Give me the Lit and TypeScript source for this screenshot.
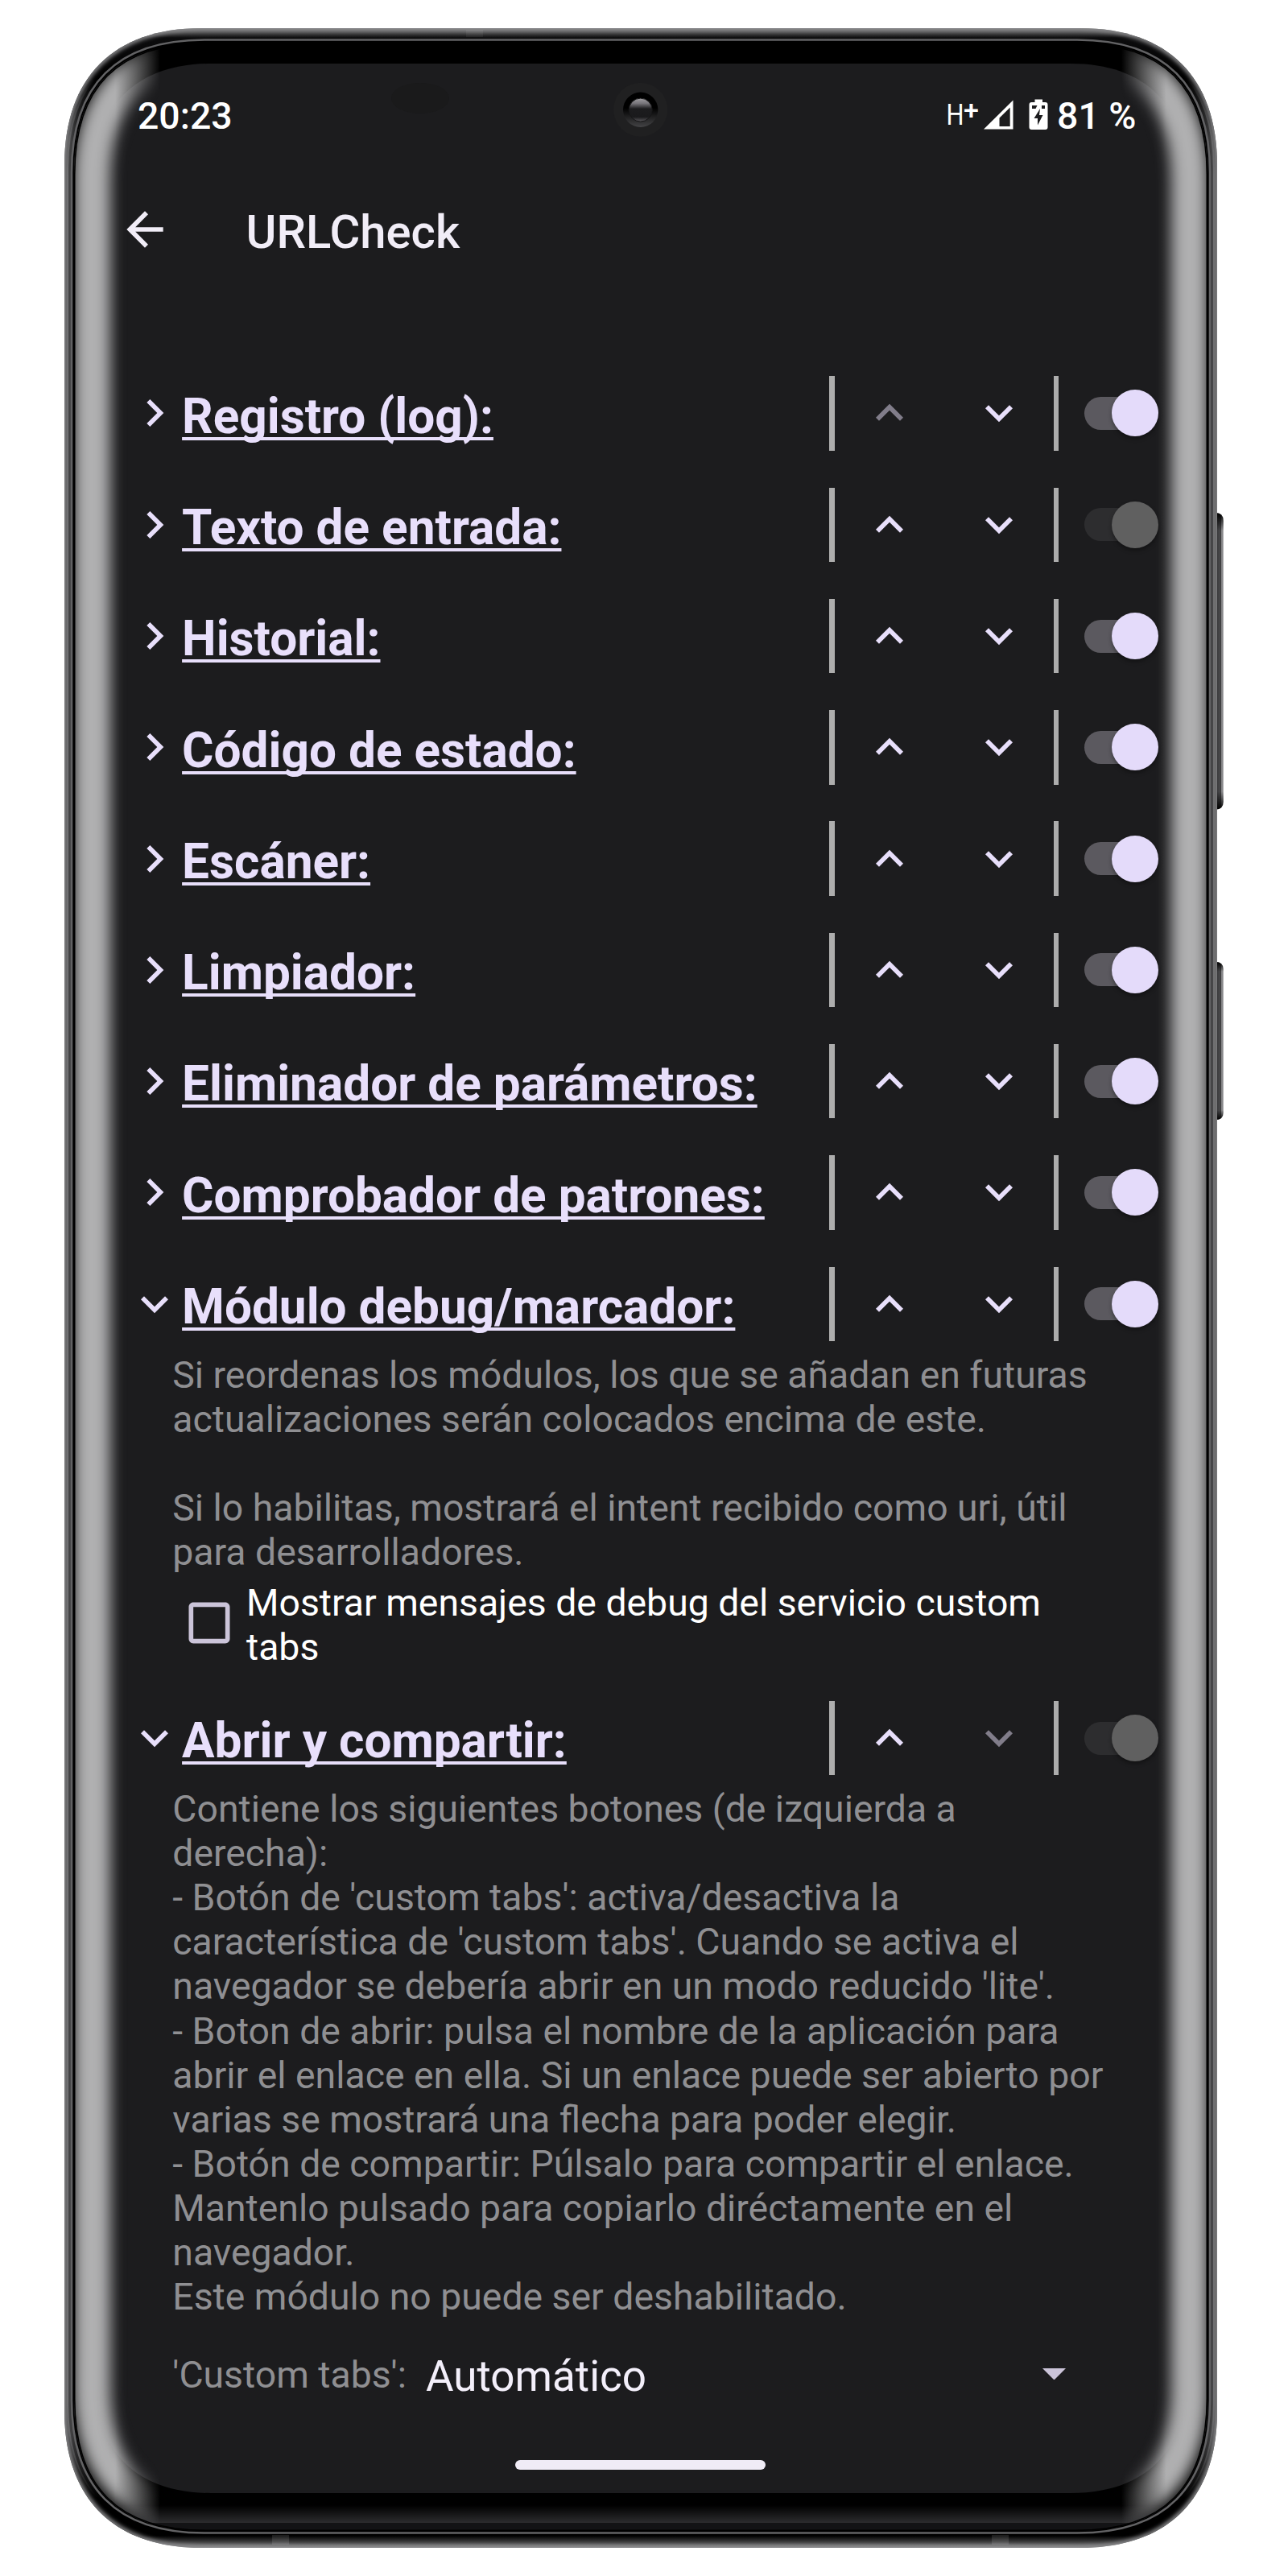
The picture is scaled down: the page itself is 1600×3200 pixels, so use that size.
import { LitElement, html, css, svg } from "lit";
import { customElement, property } from "lit/decorators.js";

/** Closed path of a rectangle whose corners ease in over length a. */
function softRect(l: number, t: number, r: number, b: number, a: number, k: number): string {
  const c = a * (1 - k);
  return `M${l} ${t + a}C${l} ${t + c} ${l + c} ${t} ${l + a} ${t}H${r - a}C${r - c} ${t} ${r} ${t + c} ${r} ${t + a}V${b - a}C${r} ${b - c} ${r - c} ${b} ${r - a} ${b}H${l + a}C${l + c} ${b} ${l} ${b - c} ${l} ${b - a}Z`;
}

const BODY = softRect(80, 35, 1512, 3165, 170, 0.64);
const BODY_DARK = softRect(84, 43, 1508, 3153, 166, 0.64);
const RING = softRect(89, 49.5, 1503, 3146.5, 165, 0.66);
const GLASS = softRect(92, 53, 1500, 3144, 164, 0.67);
const SCREEN = softRect(117, 79, 1475, 3097, 145, 0.64);
const GLOW = softRect(114, 66, 1478, 3124, 158, 0.66);

@customElement("phone-frame")
export class PhoneFrame extends LitElement {
  static styles = css`
    :host { display: block; }
    svg { display: block; }
  `;
  render() {
    return html`<svg width="1600" height="3200" viewBox="0 0 1600 3200">
      <defs>
        <linearGradient id="edgeY" gradientUnits="userSpaceOnUse" x1="0" y1="35" x2="0" y2="3165">
          <stop offset="0" stop-color="#777779" />
          <stop offset="0.0018" stop-color="#4a4a4b" />
          <stop offset="0.0038" stop-color="#0c0c0d" />
          <stop offset="0.02" stop-color="#000" />
          <stop offset="0.045" stop-color="#3c3c3d" />
          <stop offset="0.955" stop-color="#3c3c3d" />
          <stop offset="0.98" stop-color="#000" />
          <stop offset="0.9952" stop-color="#000" />
          <stop offset="0.998" stop-color="#454546" />
          <stop offset="1" stop-color="#8a8a8c" />
        </linearGradient>
        <linearGradient id="sideFade" gradientUnits="userSpaceOnUse" x1="0" y1="35" x2="0" y2="3165">
          <stop offset="0.02" stop-color="#707072" stop-opacity="0" />
          <stop offset="0.06" stop-color="#707072" />
          <stop offset="0.94" stop-color="#707072" />
          <stop offset="0.98" stop-color="#707072" stop-opacity="0" />
        </linearGradient>
        <linearGradient id="chin" x1="0" y1="0" x2="0" y2="1">
          <stop offset="0" stop-color="#000" />
          <stop offset="1" stop-color="#2c2c2e" />
        </linearGradient>
        <linearGradient id="key" x1="0" y1="0" x2="1" y2="0">
          <stop offset="0" stop-color="#2c2c2e" />
          <stop offset="0.55" stop-color="#4a4a4c" />
          <stop offset="0.68" stop-color="#3a3a3c" />
          <stop offset="0.75" stop-color="#858587" />
          <stop offset="1" stop-color="#8c8c8e" />
        </linearGradient>
        <linearGradient id="keyEnds" x1="0" y1="0" x2="0" y2="1">
          <stop offset="0" stop-color="#000" />
          <stop offset="0.06" stop-color="#000" stop-opacity="0" />
          <stop offset="0.94" stop-color="#000" stop-opacity="0" />
          <stop offset="1" stop-color="#000" />
        </linearGradient>
        <clipPath id="glassClip"><path d=${GLASS} /></clipPath>
        <filter id="soft" filterUnits="userSpaceOnUse" x="0" y="0" width="1600" height="3200">
          <feGaussianBlur stdDeviation="2.5" />
        </filter>
        <clipPath id="bodyClip"><path d=${BODY} /></clipPath>
      </defs>
      <path d="M1510 637Q1519.7 637 1519.7 647V996Q1519.7 1005.500 1510 1005.500Z" fill="url(#key)" />
      <path d="M1510 637Q1519.700 637 1519.700 647V996Q1519.700 1005.500 1510 1005.500Z" fill="url(#keyEnds)" />
      <path d="M1510 1195Q1519.700 1195 1519.700 1204V1382Q1519.700 1391 1510 1391Z" fill="url(#key)" />
      <path d="M1510 1195Q1519.700 1195 1519.700 1204V1382Q1519.700 1391 1510 1391Z" fill="url(#keyEnds)" />
      <path d=${BODY} fill="url(#edgeY)" />
      <g clip-path="url(#bodyClip)">
        <path d=${BODY} fill="none" stroke="#8a8a8c" stroke-width="6" filter="url(#soft)" />
        <path d=${BODY_DARK} fill="none" stroke="url(#sideFade)" stroke-width="2" />
        <rect x="579" y="37" width="21" height="9" fill="#fff" opacity="0.06" />
        <rect x="338" y="3149" width="21" height="12" fill="#fff" opacity="0.11" />
        <rect x="1232" y="3149" width="21" height="12" fill="#fff" opacity="0.11" />
      </g>
      <path d=${RING} fill="#000" stroke="#626264" stroke-width="2.600" />
      <g clip-path="url(#glassClip)">
        <rect x="92" y="3112" width="1408" height="22" fill="url(#chin)" />
        <rect x="92" y="3134" width="1408" height="11" fill="#131315" />
      </g>
      <path d=${SCREEN} fill="#1c1c1e" />
      <ellipse cx="522" cy="122" rx="36" ry="19" fill="#1a1a1b" />
    </svg>`;
  }
}

@customElement("glass-glow")
export class GlassGlow extends LitElement {
  static styles = css`
    :host { display: block; }
    svg { display: block; }
  `;
  render() {
    return html`<svg width="1600" height="3200" viewBox="0 0 1600 3200">
      <defs>
        <clipPath id="inner"><path d=${GLASS} /></clipPath>
        <linearGradient id="sides" gradientUnits="userSpaceOnUse" x1="0" y1="0" x2="1592" y2="0">
          <stop offset="0.090" stop-color="#fff" />
          <stop offset="0.125" stop-color="#000" />
          <stop offset="0.875" stop-color="#000" />
          <stop offset="0.910" stop-color="#fff" />
        </linearGradient>
        <mask id="sideMask" maskUnits="userSpaceOnUse" x="0" y="0" width="1600" height="3200">
          <rect width="1600" height="3200" fill="url(#sides)" />
        </mask>
        <filter id="blur" filterUnits="userSpaceOnUse" x="0" y="0" width="1600" height="3200" color-interpolation-filters="sRGB">
          <feGaussianBlur stdDeviation="9" />
        </filter>
      </defs>
      <g clip-path="url(#inner)">
        <g mask="url(#sideMask)">
          <path d=${GLOW} fill="none" stroke="#b0b0b1" stroke-width="46" filter="url(#blur)" />
        </g>
        <path d=${GLASS} fill="none" stroke="#000" stroke-width="3" />
      </g>
      <defs>
        <linearGradient id="rim" x1="0" y1="0" x2="0" y2="1">
          <stop offset="0.45" stop-color="#000" />
          <stop offset="1" stop-color="#444446" />
        </linearGradient>
        <linearGradient id="lens" x1="0" y1="0" x2="0" y2="1">
          <stop offset="0" stop-color="#a09ea2" />
          <stop offset="0.220" stop-color="#77757a" />
          <stop offset="0.450" stop-color="#1c1c1e" />
          <stop offset="0.800" stop-color="#1a1a1c" />
          <stop offset="1" stop-color="#5c5a5e" />
        </linearGradient>
      </defs>
      <circle cx="795.700" cy="136.300" r="33.500" fill="#202021" />
      <circle cx="795.700" cy="136.300" r="21.700" fill="url(#rim)" />
      <circle cx="795.700" cy="136.600" r="14.500" fill="url(#lens)" stroke="#161617" stroke-width="1" />
    </svg>`;
  }
}

const ICONS: Record<string, string> = {
  right: "M8.590 16.590L13.170 12 8.590 7.410 10 6l6 6-6 6z",
  up: "M12 8l-6 6 1.410 1.410L12 10.830l4.590 4.580L18 14z",
  down: "M16.590 8.590L12 13.170 7.410 8.590 6 10l6 6 6-6z",
  back: "M20 11H7.830l5.590-5.590L12 4l-8 8 8 8 1.410-1.410L7.830 13H20z",
  box: "M19 5v14H5V5h14m0-2H5c-1.100 0-2 .900-2 2v14c0 1.100.900 2 2 2h14c1.100 0 2-.900 2-2V5c0-1.100-.900-2-2-2z",
};

const icon = (name: string) =>
  html`<svg class="icon" viewBox="0 0 24 24">${svg`<path d=${ICONS[name]} fill="currentColor" />`}</svg>`;

@customElement("module-row")
export class ModuleRow extends LitElement {
  @property() label = "";
  @property({ type: Boolean }) open = false;
  @property({ type: Boolean }) first = false;
  @property({ type: Boolean }) last = false;
  @property({ type: Boolean }) locked = false;

  static styles = css`
    :host { display: block; }
    .row { display: flex; align-items: center; height: 92.4px; padding-left: 157.6px; color: #e8dffb; }
    .icon { display: block; width: 68px; height: 68px; flex: none; }
    .title {
      width: 804.3px; margin-left: 0.5px; padding-top: 8.5px; box-sizing: border-box; white-space: nowrap;
      font-size: 60.3px; line-height: 72px; font-weight: 700;
      text-decoration: underline; text-decoration-skip-ink: none;
      text-decoration-thickness: 3.5px; text-underline-offset: 4.5px;
    }
    .bar { width: 6.5px; height: 92.4px; background: #adadad; flex: none; }
    .step { width: 136px; display: flex; justify-content: center; flex: none; }
    .off { color: #817d8a; }
    .switch {
      display: flex; align-items: center; justify-content: flex-end; margin-left: 31.4px;
      width: 92px; height: 41px; border-radius: 21px; flex: none;
      background: linear-gradient(90deg, #5b595f 75px, transparent 75px);
    }
    .thumb { width: 58px; height: 58px; border-radius: 50%; background: #e4dbfa; flex: none; box-shadow: 0 3px 5px rgba(0, 0, 0, 0.35); }
    .locked { background: linear-gradient(90deg, #2d2d2f 75px, transparent 75px); }
    .locked .thumb { background: #606060; }
  `;
  render() {
    return html`<div class="row">
      ${icon(this.open ? "down" : "right")}
      <div class="title">${this.label}</div>
      <div class="bar"></div>
      <div class="step ${this.first ? "off" : ""}">${icon("up")}</div>
      <div class="step ${this.last ? "off" : ""}">${icon("down")}</div>
      <div class="bar"></div>
      <div class="switch ${this.locked ? "locked" : ""}"><div class="thumb"></div></div>
    </div>`;
  }
}

const MODULES = [
  { label: "Registro (log):", first: true },
  { label: "Texto de entrada:", locked: true },
  { label: "Historial:" },
  { label: "Código de estado:" },
  { label: "Escáner:" },
  { label: "Limpiador:" },
  { label: "Eliminador de parámetros:" },
  { label: "Comprobador de patrones:" },
];

const DEBUG_TEXT = [
  "Si reordenas los módulos, los que se añadan en futuras",
  "actualizaciones serán colocados encima de este.",
  "",
  "Si lo habilitas, mostrará el intent recibido como uri, útil",
  "para desarrolladores.",
].join("\n");

const OPEN_TEXT = [
  "Contiene los siguientes botones (de izquierda a",
  "derecha):",
  "- Botón de 'custom tabs': activa/desactiva la",
  "característica de 'custom tabs'. Cuando se activa el",
  "navegador se debería abrir en un modo reducido 'lite'.",
  "- Boton de abrir: pulsa el nombre de la aplicación para",
  "abrir el enlace en ella. Si un enlace puede ser abierto por",
  "varias se mostrará una flecha para poder elegir.",
  "- Botón de compartir: Púlsalo para compartir el enlace.",
  "Mantenlo pulsado para copiarlo diréctamente en el",
  "navegador.",
  "Este módulo no puede ser deshabilitado.",
].join("\n");

@customElement("app-root")
export class AppRoot extends LitElement {
  static styles = css`
    :host {
      display: block; position: relative; width: 1600px; height: 3200px; overflow: hidden;
      background: #fff; font-family: Roboto, "Liberation Sans", sans-serif;
    }
    .layer { position: absolute; inset: 0; pointer-events: none; }
    .content { position: relative; display: flex; flex-direction: column; padding-top: 114px; }
    .icon { display: block; width: 68px; height: 68px; flex: none; }
    .status {
      display: flex; align-items: center; height: 60px; padding: 0 188.5px 0 171px;
      color: #fff; font-size: 46.4px; line-height: 60px; font-weight: 500;
    }
    .signals { display: block; margin-left: auto; flex: none; }
    .percent { margin-left: 8px; }
    .appbar { display: flex; align-items: center; height: 112px; margin-top: 55.2px; padding-left: 146px; color: #f1edf7; }
    .heading { margin-left: 91.5px; padding-top: 5px; font-size: 58px; line-height: 68px; font-weight: 500; }
    .modules { display: flex; flex-direction: column; gap: 45.9px; margin-top: 126.1px; }
    .last { margin-top: -7.4px; }
    .text { margin-top: 14.7px; padding-left: 214.3px; white-space: pre; font-size: 46.35px; line-height: 55.1px; color: #8f8f92; }
    .check { display: flex; align-items: center; margin-top: 8.2px; padding-left: 226px; color: #cbc4d9; }
    .check .icon { margin-top: -6px; }
    .checktext { margin-left: 12px; white-space: pre; font-size: 46.35px; line-height: 55.1px; color: #fff; }
    .spinner { display: flex; align-items: center; height: 80px; margin-top: 28px; padding: 0 276.5px 0 214.3px; }
    .name { padding-top: 1px; font-size: 46.35px; line-height: 56px; color: #8f8f92; }
    .value { margin-left: 24px; padding-top: 5px; font-size: 53px; line-height: 64px; color: #f3effa; }
    .arrow { display: block; width: 29px; height: 14.5px; margin-left: auto; }
    .home { width: 311px; height: 12px; margin: 66.5px 0 0 640px; border-radius: 6px; background: #f0ecf6; }
  `;
  render() {
    return html`
      <phone-frame class="layer"></phone-frame>
      <glass-glow class="layer"></glass-glow>
      <div class="content">
        <div class="status">
          <span>20:23</span>
          <svg class="signals" width="130" height="60" viewBox="1175.500 114 130 60">
            <text x="1176" y="155" font-size="36" font-weight="400" fill="#fff" textLength="22" lengthAdjust="spacingAndGlyphs">H</text>
            <text x="1197.500" y="148" font-size="34" font-weight="500" fill="#fff">+</text>
            <path d="M1222.500 160.500L1259 124.500V160.500ZM1242 157H1255.200V133.500L1242 146.500Z" fill="#fff" fill-rule="evenodd" />
            <path d="M1286 123.500H1295.500V127H1299Q1302 127 1302 130V158Q1302 161 1299 161H1282Q1279 161 1279 158V130Q1279 127 1282 127H1286Z" fill="#fff" />
            <path d="M1282.500 131H1289L1287 135H1282.500ZM1294.500 131H1298.500V135H1294.500Z" fill="#1c1c1e" />
            <path d="M1292.500 135L1285 147H1289.500V155.500L1296 143H1291.500Z" fill="#1c1c1e" />
          </svg>
          <span class="percent">81 %</span>
        </div>
        <div class="appbar">${icon("back")}<div class="heading">URLCheck</div></div>
        <div class="modules">
          ${MODULES.map(
            (m) => html`<module-row .label=${m.label} ?first=${!!m.first} ?locked=${!!m.locked}></module-row>`
          )}
          <div>
            <module-row label="Módulo debug/marcador:" open></module-row>
            <div class="text">${DEBUG_TEXT}</div>
            <div class="check">
              ${icon("box")}
              <div class="checktext">Mostrar mensajes de debug del servicio custom<br />tabs</div>
            </div>
          </div>
          <div class="last">
            <module-row label="Abrir y compartir:" open last locked></module-row>
            <div class="text">${OPEN_TEXT}</div>
            <div class="spinner">
              <span class="name">'Custom tabs':</span>
              <span class="value">Automático</span>
              <svg class="arrow" viewBox="0 0 29 14.500"><path d="M0 0H29L14.500 14.500Z" fill="#cbc4d9" /></svg>
            </div>
            <div class="home"></div>
          </div>
        </div>
      </div>
    `;
  }
}
